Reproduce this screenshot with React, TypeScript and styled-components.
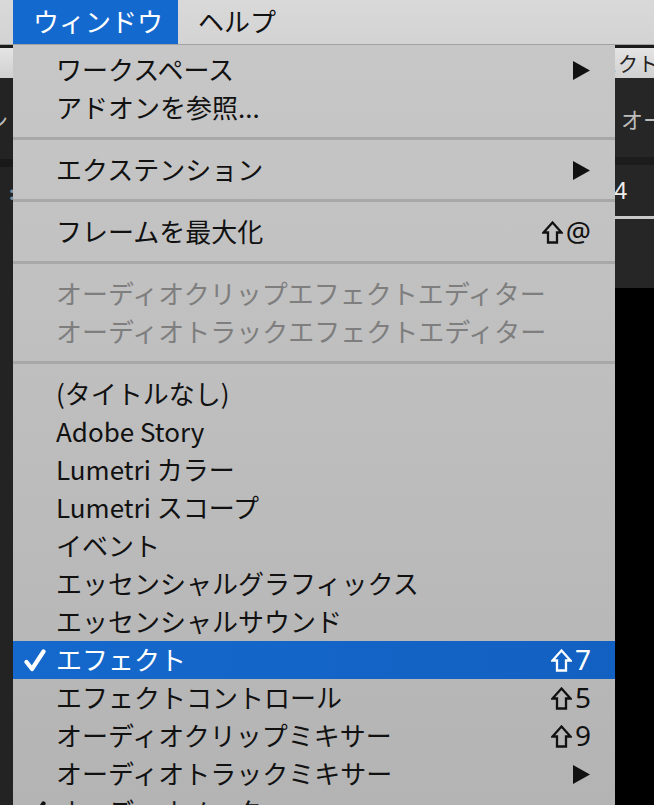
import React from "react"
import styled, { createGlobalStyle } from "styled-components"

const GlobalStyle = createGlobalStyle`
    html, body {
        margin: 0;
        padding: 0;
        background: #1f1f1f;
        overflow: hidden;
    }
    body {
        font-family: "Noto Sans CJK JP", "Noto Sans", sans-serif;
    }
`

type Entry =
    | { kind: 'sep' }
    | {
        kind: 'item'
        label: string
        shortcut?: string
        submenu?: boolean
        disabled?: boolean
        checked?: boolean
        active?: boolean
    }

const entries: Entry[] = [
    { kind: 'item', label: 'ワークスペース', submenu: true },
    { kind: 'item', label: 'アドオンを参照...' },
    { kind: 'sep' },
    { kind: 'item', label: 'エクステンション', submenu: true },
    { kind: 'sep' },
    { kind: 'item', label: 'フレームを最大化', shortcut: '@' },
    { kind: 'sep' },
    { kind: 'item', label: 'オーディオクリップエフェクトエディター', disabled: true },
    { kind: 'item', label: 'オーディオトラックエフェクトエディター', disabled: true },
    { kind: 'sep' },
    { kind: 'item', label: '(タイトルなし)' },
    { kind: 'item', label: 'Adobe Story' },
    { kind: 'item', label: 'Lumetri カラー' },
    { kind: 'item', label: 'Lumetri スコープ' },
    { kind: 'item', label: 'イベント' },
    { kind: 'item', label: 'エッセンシャルグラフィックス' },
    { kind: 'item', label: 'エッセンシャルサウンド' },
    { kind: 'item', label: 'エフェクト', shortcut: '7', checked: true, active: true },
    { kind: 'item', label: 'エフェクトコントロール', shortcut: '5' },
    { kind: 'item', label: 'オーディオクリップミキサー', shortcut: '9' },
    { kind: 'item', label: 'オーディオトラックミキサー', submenu: true },
    { kind: 'item', label: 'オーディオメーター', checked: true },
]

// ---------- screen frame ----------

const Screen = styled.div`
    position: relative;
    width: 654px;
    height: 805px;
    overflow: hidden;
    display: flex;
    flex-direction: column;
`

const MenuBar = styled.div`
    height: 44px;
    flex-shrink: 0;
    display: flex;
    align-items: stretch;
    padding-left: 13px;
    background: linear-gradient(#d9d9d9, #d3d3d3);
    border-bottom: 1px solid #a2a2a2;
`

const BarItem = styled.div<{ $open?: boolean }>`
    display: flex;
    align-items: center;
    padding: 0 15px 3px 20px;
    font-size: 26px;
    color: ${p => (p.$open ? '#ffffff' : '#111111')};
    background: ${p => (p.$open ? '#1469cf' : 'transparent')};
`

// ---------- application behind the menu ----------

const Workspace = styled.div`
    flex: 1;
    display: grid;
    grid-template-columns: 13px 1fr 39px;
    background: #000;
`

const SideColumn = styled.div`
    display: flex;
    flex-direction: column;
    overflow: hidden;
    border-top: 3px solid #1b1b1b;
`

const TabStrip = styled.div`
    height: 30px;
    flex-shrink: 0;
    display: flex;
    align-items: center;
    overflow: hidden;
    white-space: nowrap;
    background: linear-gradient(#e4e4e4, #d0d0d0);
    color: #222;
    font-size: 20px;
`

const Panel = styled.div<{ $h?: number; $bg?: string }>`
    height: ${p => (p.$h ? `${p.$h}px` : 'auto')};
    flex: ${p => (p.$h ? '0 0 auto' : '1')};
    display: flex;
    align-items: center;
    overflow: hidden;
    white-space: nowrap;
    background: ${p => p.$bg ?? '#232323'};
    color: #bdbdbd;
    font-size: 22px;
`

const Divider = styled.div<{ $c?: string; $h?: number }>`
    height: ${p => p.$h ?? 8}px;
    flex-shrink: 0;
    background: ${p => p.$c ?? '#191919'};
`

const Dots = styled.span`
    color: #7a8fa0;
    font-size: 18px;
    font-weight: 700;
    line-height: 1;
    padding-left: 9px;
`

const ValueText = styled.span`
    color: #ededed;
    font-family: "Liberation Sans", sans-serif;
    font-size: 24px;
    letter-spacing: 12px;
    margin-left: -1px;
`

// ---------- the window menu ----------

const Menu = styled.div`
    position: absolute;
    top: 45px;
    left: 13px;
    width: 602px;
    padding-top: 6px;
    background: linear-gradient(#c7c7c7, #b3b3b3);
    display: flex;
    flex-direction: column;
`

const Row = styled.div<{ $active?: boolean; $disabled?: boolean }>`
    height: 38px;
    flex-shrink: 0;
    display: grid;
    grid-template-columns: 43px 1fr auto;
    align-items: center;
    padding-right: 24px;
    font-size: 26px;
    white-space: nowrap;
    color: ${p => (p.$active ? '#ffffff' : p.$disabled ? '#7e7e7e' : '#111111')};
    background: ${p => (p.$active ? 'linear-gradient(90deg, #1569cc, #1260c2)' : 'transparent')};
`

const Label = styled.span`
    line-height: 1;
    padding-bottom: 2px;
`

const CheckCell = styled.span`
    display: flex;
    justify-content: center;
    align-items: center;
    padding-left: 1px;
`

const ShortcutCell = styled.span`
    display: flex;
    align-items: center;
    gap: 3px;
`

const KeyChar = styled.span`
    font-family: "Noto Sans", "DejaVu Sans", sans-serif;
    font-size: 28px;
    line-height: 1;
    padding-bottom: 3px;
`

const Separator = styled.div`
    height: 24px;
    flex-shrink: 0;
    display: flex;
    align-items: center;
    &::after {
        content: "";
        display: block;
        width: 100%;
        height: 3px;
        margin-top: -1px;
        background: #a8a8a8;
    }
`

const Check = ({ color }: { color: string }) => (
    <svg width="22" height="23" viewBox="0 0 22 23">
        <path d="M2.5 13 L8 20 L19.5 2.5" fill="none" stroke={color} strokeWidth="4.2" strokeLinecap="round" strokeLinejoin="round" />
    </svg>
)

const ShiftArrow = ({ color }: { color: string }) => (
    <svg width="21" height="23" viewBox="0 0 21 23">
        <path d="M10.5 1.5 L1.5 11.5 L6 11.5 L6 21.5 L15 21.5 L15 11.5 L19.5 11.5 Z" fill="none" stroke={color} strokeWidth="2.3" strokeLinejoin="miter" />
    </svg>
)

const SubArrow = ({ color }: { color: string }) => (
    <svg width="18" height="19" viewBox="0 0 18 19">
        <polygon points="0,0 17,9.5 0,19" fill={color} />
    </svg>
)

const MenuRow = ({ entry }: { entry: Extract<Entry, { kind: 'item' }> }) => {
    const fg = entry.active ? '#ffffff' : '#111111'
    return (
        <Row $active={entry.active} $disabled={entry.disabled}>
            <CheckCell>{entry.checked && <Check color={fg} />}</CheckCell>
            <Label>{entry.label}</Label>
            <ShortcutCell>
                {entry.shortcut && (
                    <>
                        <ShiftArrow color={fg} />
                        <KeyChar>{entry.shortcut}</KeyChar>
                    </>
                )}
                {entry.submenu && <SubArrow color={fg} />}
            </ShortcutCell>
        </Row>
    )
}

export default function App() {
    return (
        <>
            <GlobalStyle />
            <Screen>
                <MenuBar>
                    <BarItem $open>ウィンドウ</BarItem>
                    <BarItem>ヘルプ</BarItem>
                </MenuBar>
                <Workspace>
                    <SideColumn>
                        <TabStrip />
                        <Panel $h={81}>
                            <span style={{ marginLeft: -14 }}>ン</span>
                        </Panel>
                        <Divider />
                        <Panel $h={50}>
                            <Dots>:</Dots>
                        </Panel>
                        <Panel />
                    </SideColumn>
                    <div />
                    <SideColumn>
                        <TabStrip>
                            <span style={{ marginLeft: -17 }}>ェクト</span>
                        </TabStrip>
                        <Panel $h={79} $bg="#262626">
                            <span style={{ marginLeft: 6 }}>オー</span>
                        </Panel>
                        <Divider $c="#1c1c1c" />
                        <Panel $h={51} $bg="#262626">
                            <ValueText>4 :</ValueText>
                        </Panel>
                        <Divider $c="#c9c9c9" $h={3} />
                        <Panel $h={69} $bg="#262626" />
                        <Panel $bg="#000" />
                    </SideColumn>
                </Workspace>
                <Menu>
                    {entries.map((e, i) =>
                        e.kind === 'sep' ? <Separator key={i} /> : <MenuRow key={i} entry={e} />
                    )}
                </Menu>
            </Screen>
        </>
    )
}
